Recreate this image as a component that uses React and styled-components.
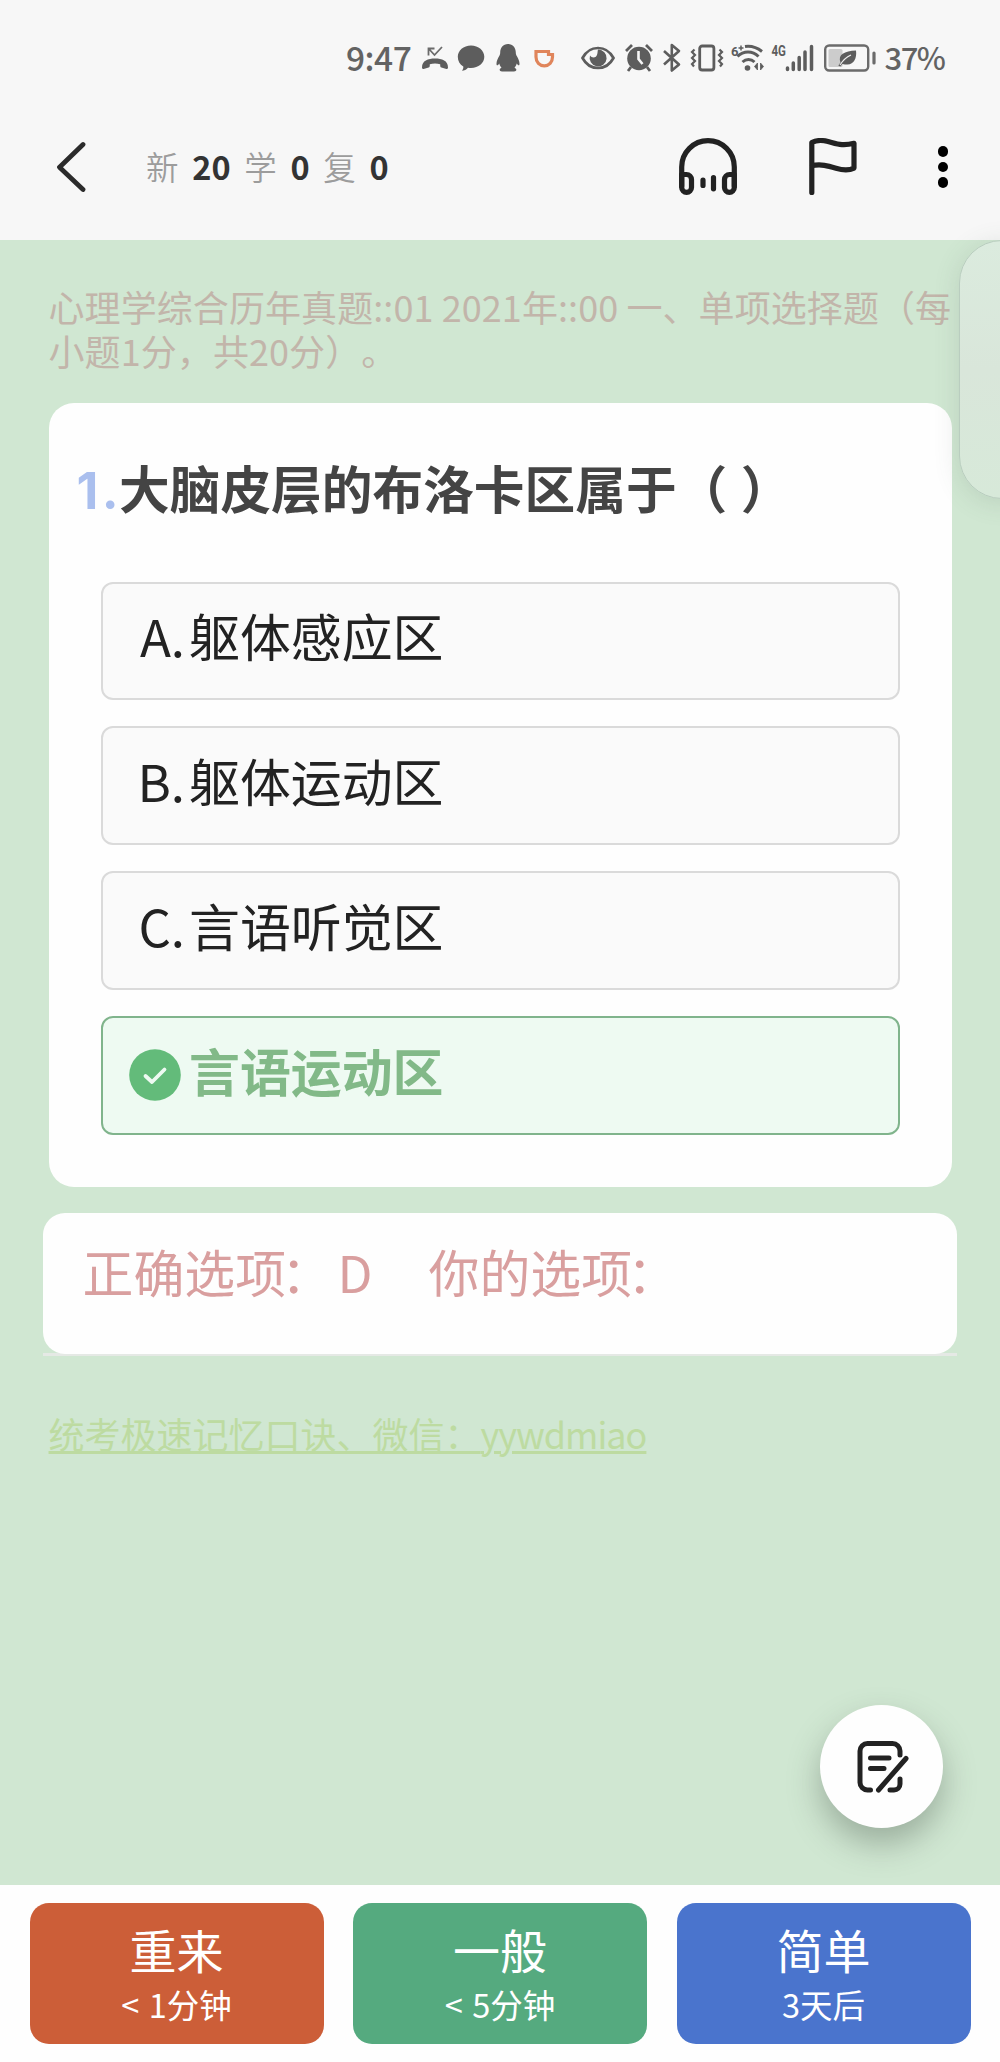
import React from "react";
import styled, { createGlobalStyle } from "styled-components";

//Data
const counts = [
  { label: "新", value: 20 },
  { label: "学", value: 0 },
  { label: "复", value: 0 },
];

const options = [
  { mark: "A.", text: "躯体感应区" },
  { mark: "B.", text: "躯体运动区" },
  { mark: "C.", text: "言语听觉区" },
  { text: "言语运动区", correct: true },
];

const answers = [
  { title: "重来", due: "< 1分钟", color: "#cc5e38" },
  { title: "一般", due: "< 5分钟", color: "#55aa7f" },
  { title: "简单", due: "3天后", color: "#4a74cd" },
];

const StatusIcons = () => {
  return (
    <>
      <StatusIcon $left={7.5} width="28" height="30" viewBox="0 0 28 30">
        <path
          d="M1 24.500c0-7 6-9 13-9s13 2 13 9c0 1.200-.6 1.600-1.600 1.400l-5-1.400c-1-.3-1.200-1-1.200-3.300-3-1-7.400-1-10.400 0 0 2.300-.2 3-1.200 3.300l-5 1.400C1.600 26.100 1 25.700 1 24.500z"
          fill="#5d5d5d"
        />
        <path
          d="M7.500 12.500V5.500h6M8 6l5.500 6 7.500-8"
          fill="none"
          stroke="#6b6b6b"
          strokeWidth="1.800"
        />
      </StatusIcon>
      <StatusIcon $left={8.5} width="28" height="30" viewBox="0 0 28 30">
        <path
          d="M14 2.500c7.500 0 13.300 5 13.300 11.300S21.500 25 14 25c-1 0-2-.1-3-.3-1.500 1.800-3.800 3-6 3 1-1.200 1.500-2.600 1.300-4.200C2.800 21.500.8 18 .8 13.800.800 7.500 6.500 2.500 14 2.500z"
          fill="#5d5d5d"
        />
      </StatusIcon>
      <StatusIcon $left={10.5} width="24" height="30" viewBox="0 0 24 30">
        <path
          d="M12 1c5 0 7.700 3.800 7.800 8.500 0 1.500.3 2.300 1 3.500 1.600 2.800 2.800 5.500 2.700 8 0 1.500-.9 1.700-1.800.7l-1-1.200c-.4 1.700-1.100 3-2.200 4.200 1.500.6 2 1.400 1.800 2.400-.1.900-.8 1.300-2.300 1.300H6c-1.500 0-2.200-.4-2.300-1.300-.2-1 .3-1.800 1.800-2.400-1.100-1.200-1.800-2.500-2.200-4.200l-1 1.200c-.9 1-1.800.8-1.800-.7-.1-2.500 1.100-5.200 2.700-8 .7-1.200 1-2 1-3.500C4.300 4.800 7 1 12 1z"
          fill="#5d5d5d"
        />
      </StatusIcon>
      <StatusIcon $left={14} width="21" height="30" viewBox="0 0 21 30">
        <path
          d="M2 8.500h12.500v3h4v2.500c0 5.200-3.500 8.800-8.200 8.800S2 19.200 2 14z"
          fill="none"
          stroke="#e0855b"
          strokeWidth="3.200"
        />
      </StatusIcon>
      <StatusIcon $left={26.5} width="34" height="30" viewBox="0 0 34 30">
        <path
          d="M1.500 15C5 8.500 10.500 5 17 5s12 3.500 15.500 10C29 21.500 23.500 25 17 25S5 21.500 1.500 15z"
          fill="none"
          stroke="#5d5d5d"
          strokeWidth="2.700"
        />
        <path
          d="M17 6.500a8.500 8.500 0 1 1-8 6c1.200 2 4 2.700 5.800 1.200 2.200-1.900 1.600-5.500 2.200-7.200z"
          fill="#5d5d5d"
        />
      </StatusIcon>
      <StatusIcon $left={9} width="30" height="30" viewBox="0 0 30 30">
        <circle cx="15" cy="15.500" r="11.800" fill="#5d5d5d" />
        <path
          d="M2 8l6-6M28 8l-6-6M7 24l-3 4M23 24l3 4"
          stroke="#5d5d5d"
          strokeWidth="2.800"
        />
        <path
          d="M14.500 8v8l4 5"
          fill="none"
          stroke="#f7f7f7"
          strokeWidth="2.600"
        />
      </StatusIcon>
      <StatusIcon $left={7.5} width="20" height="30" viewBox="0 0 20 30">
        <path
          d="M2 8l15 13.500-7.200 6V2l7.200 6L2 21.500"
          fill="none"
          stroke="#5d5d5d"
          strokeWidth="2.600"
          strokeLinejoin="round"
        />
      </StatusIcon>
      <StatusIcon $left={8} width="34" height="30" viewBox="0 0 34 30">
        <rect
          x="9.700"
          y="3"
          width="14.200"
          height="24"
          rx="2.500"
          fill="none"
          stroke="#5d5d5d"
          strokeWidth="2.800"
        />
        <path
          d="M4.500 6.500L2 9l3 3-3 3 3 3-3 3 2 2.500M29.500 6.500l2.500 2.500-3 3 3 3-3 3 3 3-2 2.500"
          fill="none"
          stroke="#5d5d5d"
          strokeWidth="2.200"
        />
      </StatusIcon>
      <StatusIcon $left={7} width="34" height="30" viewBox="0 0 34 30">
        <text x="0" y="12.500" fontSize="13" fontWeight="700" fill="#5d5d5d">
          6
        </text>
        <path d="M7.500 5h5M10 2.500v5" stroke="#5d5d5d" strokeWidth="1.500" />
        <path
          d="M14 3.500c7-1 12 1 17 5M6.500 13.500c6-6 15-6 21 0M11.500 19c3.500-3.200 8.500-3.200 12 0"
          fill="none"
          stroke="#5d5d5d"
          strokeWidth="3"
        />
        <circle cx="16.500" cy="25" r="2.800" fill="#5d5d5d" />
        <path
          d="M26.500 20v7l-3-3.500zM29.500 20v7l3-3.500z"
          fill="#5d5d5d"
          stroke="#5d5d5d"
          strokeWidth="0.800"
        />
      </StatusIcon>
      <StatusIcon $left={6} width="44" height="30" viewBox="0 0 44 30">
        <text
          x="0.500"
          y="12.500"
          fontSize="15"
          fontWeight="700"
          fill="#5d5d5d"
          textLength="14.500"
          lengthAdjust="spacingAndGlyphs"
        >
          4G
        </text>
        <path
          d="M16.500 25v1.500M22.300 20v6.500M28.200 14.500v12M34 9v17.500M40.500 3.500v23"
          stroke="#5d5d5d"
          strokeWidth="3.500"
          strokeLinecap="round"
        />
      </StatusIcon>
      <StatusIcon $left={9} width="52" height="30" viewBox="0 0 52 30">
        <rect
          x="1.200"
          y="2.500"
          width="43"
          height="25"
          rx="4"
          fill="none"
          stroke="#6b6b6b"
          strokeWidth="2.400"
        />
        <rect x="4.500" y="6" width="14" height="18" rx="1.500" fill="#cccccc" />
        <path
          d="M32 7.500c1 7.500-2 14-8.500 14-1.800 0-3.600-.4-5.200-.6l-2 2.600-2-1 2.200-3C13.500 11.500 20.500 8 32 7.500z"
          fill="#5d5d5d"
        />
        <path
          d="M16 22c3-5 6.500-8 11-10"
          stroke="#f0f0f0"
          strokeWidth="1.200"
          fill="none"
        />
        <path
          d="M50 10v10"
          stroke="#6b6b6b"
          strokeWidth="3.200"
          strokeLinecap="round"
        />
      </StatusIcon>
    </>
  );
};

const App = () => {
  return (
    <Page>
      <GlobalStyle />
      <StatusBar>
        <Clock>9:47</Clock>
        <StatusIcons />
        <Percent>37%</Percent>
      </StatusBar>

      <Nav>
        <BackButton aria-label="back">
          <svg width="32" height="54" viewBox="0 0 32 54">
            <path d="M29 4.500L5.500 27.200 29 49.500" />
          </svg>
        </BackButton>
        <Counts>
          {counts.map((item) => (
            <React.Fragment key={item.label}>
              <span>{item.label}</span>
              <b>{item.value}</b>
            </React.Fragment>
          ))}
        </Counts>
        <Tools>
          <svg width="58" height="58" viewBox="0 0 58 58">
            <path d="M2.700 48V29a26.200 26.200 0 0 1 52.600 0v19" />
            <path d="M2.700 36.500h4.800a5 5 0 0 1 5 5v8a4.900 4.900 0 0 1-9.800 0zM55.300 36.500h-4.800a5 5 0 0 0-5 5v8a4.900 4.900 0 0 0 9.800 0z" />
            <path d="M24 42.200v5.300M34.500 39.500v11.300" />
          </svg>
          <svg width="50" height="58" viewBox="0 0 50 58">
            <path d="M4.800 54.500V4.500C9 2.300 15 2 21 3.500c8 2.500 15 4.500 26 1.800v24.800c-5 2.600-12 2-18 .2-8-2.500-15-4.500-24.200-2.600" />
          </svg>
          <Dots>
            <i />
            <i />
            <i />
          </Dots>
        </Tools>
      </Nav>

      <Study>
        <Deck>
          心理学综合历年真题::01 2021年::00 一、单项选择题（每小题1分，共20分）。
        </Deck>
        <Card>
          <Question>
            <b>1.</b>大脑皮层的布洛卡区属于（ ）
          </Question>
          <OptionList>
            {options.map((option) => (
              <Option key={option.text} $correct={option.correct}>
                <Mark>
                  {option.correct ? (
                    <svg width="52" height="52" viewBox="0 0 52 52">
                      <circle cx="26" cy="26" r="25.800" fill="#63bb7a" />
                      <path
                        d="M16.500 27l6.500 6L35.500 20.500"
                        fill="none"
                        stroke="#eefaf2"
                        strokeWidth="3.800"
                        strokeLinecap="round"
                        strokeLinejoin="round"
                      />
                    </svg>
                  ) : (
                    option.mark
                  )}
                </Mark>
                {option.text}
              </Option>
            ))}
          </OptionList>
        </Card>
        <Result>
          <ResultLabel>
            正确选项<i>：</i>
          </ResultLabel>
          <ResultKey>D</ResultKey>
          <ResultLabel>
            你的选项<i>：</i>
          </ResultLabel>
        </Result>
        <Tip>
          统考极速记忆口诀、微信：<span>yywdmiao</span>
        </Tip>
        <SideHandle />
        <NoteButton aria-label="note">
          <svg width="52" height="54" viewBox="0 0 52 54">
            <path d="M13.500 50H10.500a7.500 7.500 0 0 1-7.500-7.500V11A7.500 7.500 0 0 1 10.500 3.500h25A7.500 7.500 0 0 1 43 11v4M43 39v5a6 6 0 0 1-6 6h-4M13.500 18H32M13.500 28.500H27M21.500 50L49 18.500" />
          </svg>
        </NoteButton>
      </Study>

      <AnswerBar>
        {answers.map((answer) => (
          <Answer key={answer.title} $color={answer.color}>
            <h3>{answer.title}</h3>
            <p>{answer.due}</p>
          </Answer>
        ))}
      </AnswerBar>
    </Page>
  );
};

const GlobalStyle = createGlobalStyle`
  * {
    box-sizing: border-box;
    margin: 0;
    padding: 0;
  }

  body {
    background: white;
    font-family: "Noto Sans CJK SC", sans-serif;
  }
`;

const Page = styled.div`
  width: 1000px;
  height: 2062px;
  display: flex;
  flex-direction: column;
  overflow: hidden;
`;

const StatusBar = styled.div`
  height: 94px;
  padding: 22px 0 0 346px;
  display: flex;
  align-items: center;
  background: #f7f7f7;
  color: #636363;
`;

const Clock = styled.span`
  width: 67px;
  margin-top: -2px;
  font-size: 33.500px;
  font-weight: 500;
  line-height: 40px;
  letter-spacing: -0.500px;
  white-space: nowrap;
`;

const Percent = styled.span`
  margin: -2px 0 0 9px;
  font-size: 31px;
  font-weight: 500;
  line-height: 40px;
  letter-spacing: -1.500px;
`;

const StatusIcon = styled.svg`
  flex-shrink: 0;
  margin-left: ${(props) => props.$left}px;
  font-family: "Roboto", sans-serif;
`;

const Nav = styled.header`
  height: 145.500px;
  padding: 0 52px 0 53.500px;
  display: flex;
  align-items: center;
  background: #f7f7f7;
`;

const BackButton = styled.button`
  border: none;
  background: none;
  display: flex;

  svg {
    fill: none;
    stroke: #2b2b2b;
    stroke-width: 4.800;
    stroke-linecap: round;
    stroke-linejoin: round;
  }
`;

const Counts = styled.div`
  margin-left: 60.500px;
  display: flex;
  align-items: center;
  gap: 13.700px;
  font-size: 32.500px;
  line-height: 44px;
  padding-bottom: 1px;

  span {
    color: #9c9c9c;
    font-weight: 350;
  }

  b {
    color: #333333;
    font-size: 32.500px;
  }
`;

const Tools = styled.div`
  margin-left: auto;
  display: flex;
  align-items: center;

  svg {
    margin-right: 70px;
    fill: none;
    stroke: #222222;
    stroke-width: 5.200;
    stroke-linecap: round;
    stroke-linejoin: round;
  }

  svg + svg {
    margin-right: 80.500px;
  }
`;

const Dots = styled.div`
  display: flex;
  flex-direction: column;
  gap: 5px;

  i {
    width: 10.500px;
    height: 10.500px;
    border-radius: 50%;
    background: black;
  }
`;

const Study = styled.main`
  position: relative;
  height: 1645.500px;
  padding: 44.500px 43px 0;
  background: #d0e7d2;
`;

const Deck = styled.p`
  margin-right: -10px;
  padding-left: 5.500px;
  font-size: 36px;
  line-height: 44px;
  letter-spacing: 0.080px;
  text-spacing-trim: space-all;
  color: #c2b5aa;
`;

const Card = styled.section`
  height: 784px;
  margin: 31px 5px 0 5.500px;
  padding: 54px 52px 0;
  border-radius: 25px;
  background: #fefefe;
`;

const Question = styled.h1`
  margin-left: -24px;
  font-size: 50.700px;
  font-weight: 700;
  line-height: 60px;
  word-spacing: 2px;
  color: #444444;
  white-space: nowrap;

  b {
    display: inline-block;
    width: 42.500px;
    font-family: "Inter", sans-serif;
    font-weight: 700;
    letter-spacing: 3.500px;
    color: #aabfee;
  }
`;

const OptionList = styled.ul`
  margin-top: 60.500px;
  display: flex;
  flex-direction: column;
  gap: 26.200px;
  list-style: none;
`;

const Option = styled.li`
  height: 118.700px;
  padding-top: 21.500px;
  display: flex;
  border: 2px solid ${(props) => (props.$correct ? "#80b48c" : "#dadada")};
  border-radius: 12px;
  background: ${(props) => (props.$correct ? "#eefaf2" : "#fafafa")};
  color: ${(props) => (props.$correct ? "#82b988" : "#222222")};
  font-size: 50.900px;
  font-weight: ${(props) => (props.$correct ? 700 : 400)};
  line-height: 60px;
`;

const Mark = styled.span`
  width: 86.500px;
  padding-right: 4px;
  text-align: right;

  svg {
    display: block;
    margin: 9.500px 0 0 26px;
  }
`;

const Result = styled.section`
  height: 143px;
  margin-top: 26px;
  padding: 28px 0 0 39.500px;
  display: flex;
  font-size: 50.900px;
  line-height: 60px;
  color: #d99f9f;
  background: linear-gradient(#e5e9e5, #e5e9e5) bottom / 100% 3px no-repeat;
  position: relative;
  z-index: 0;

  &::before {
    content: "";
    position: absolute;
    z-index: -1;
    inset: 0 0 2.500px;
    border-radius: 22px;
    background: #fefefe;
  }
`;

const ResultLabel = styled.span`
  width: 255px;
  white-space: nowrap;

  i {
    margin-left: -5px;
    font-style: normal;
  }
`;

const ResultKey = styled.span`
  width: 91px;
`;

const Tip = styled.p`
  margin: 55px 0 0 5.500px;
  font-size: 36px;
  line-height: 44px;
  color: #bddba1;
  text-decoration: underline;
  text-decoration-thickness: 2.500px;

  span {
    letter-spacing: -1px;
  }
`;

const SideHandle = styled.div`
  position: absolute;
  top: 0;
  right: -45px;
  width: 86px;
  height: 259px;
  border: 1px solid #b9cdbf;
  border-radius: 43px;
  background: linear-gradient(#dbebde, #d9e6da 50%, #d7e9d9);
  box-shadow: 0 4px 26px rgba(80, 100, 90, 0.16);
`;

const NoteButton = styled.button`
  position: absolute;
  right: 57px;
  bottom: 57px;
  width: 123px;
  height: 123px;
  display: flex;
  align-items: center;
  justify-content: center;
  border: none;
  border-radius: 50%;
  background: #fefefe;
  box-shadow: 0 16px 32px rgba(60, 75, 65, 0.36);

  svg {
    margin-left: 3px;
    fill: none;
    stroke: #222222;
    stroke-width: 5;
    stroke-linecap: round;
    stroke-linejoin: round;
  }
`;

const AnswerBar = styled.footer`
  flex: 1;
  padding: 17.500px 29.500px 18.500px;
  display: grid;
  grid-template-columns: repeat(3, 1fr);
  gap: 29.500px;
  background: #fefefe;
`;

const Answer = styled.button`
  display: flex;
  flex-direction: column;
  align-items: center;
  padding-top: 18px;
  border: none;
  border-radius: 19px;
  background: ${(props) => props.$color};
  color: white;
  font-family: inherit;

  h3 {
    font-size: 47px;
    font-weight: 400;
    line-height: 56px;
  }

  p {
    margin-top: 5.500px;
    font-size: 32.500px;
    line-height: 44px;
    word-spacing: 2px;
  }
`;

export default App;
